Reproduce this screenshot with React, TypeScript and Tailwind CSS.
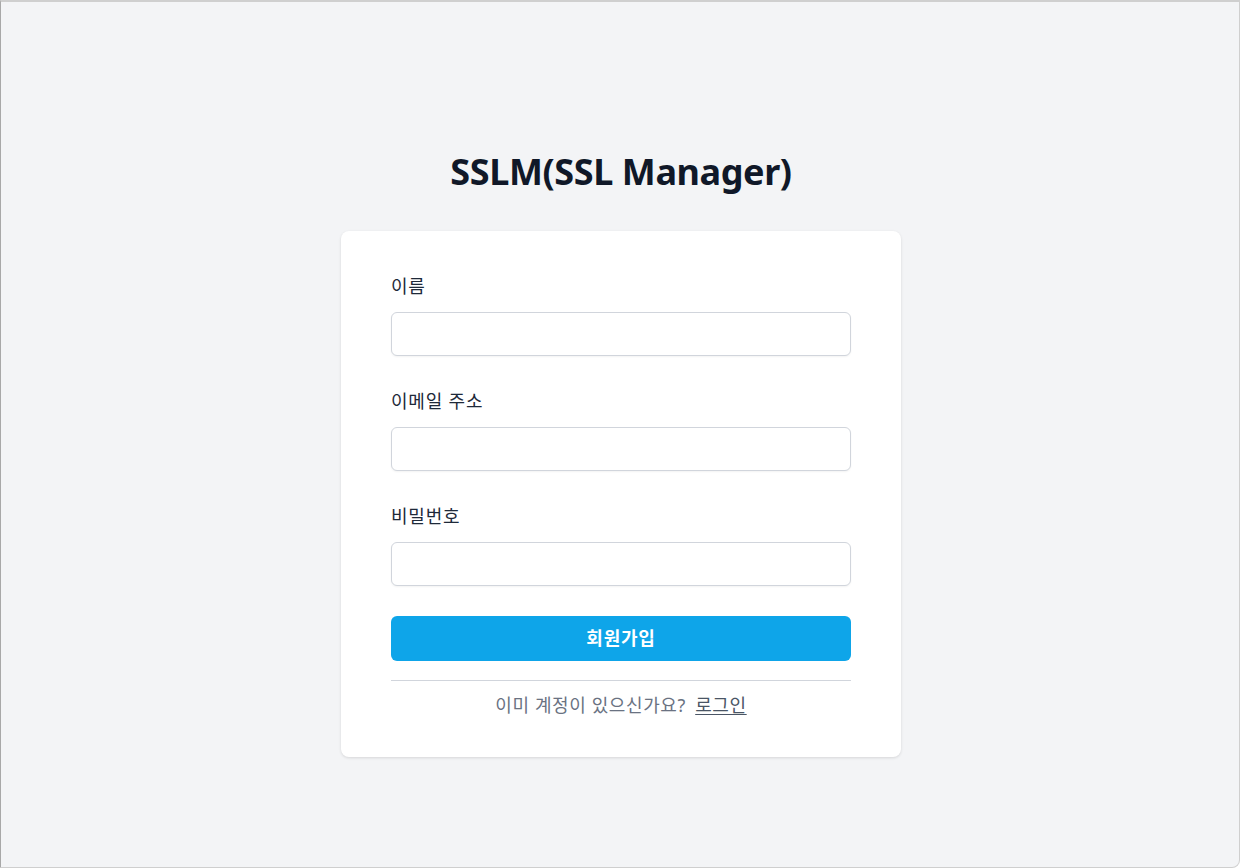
import { useState } from "react";

const font = { fontFamily: '"Noto Sans", "Noto Sans CJK KR", sans-serif' };

interface FieldProps {
    label: string;
    type?: string;
    value: string;
    onChange: (v: string) => void;
}

const Field: React.FC<FieldProps> = ({ label, type = "text", value, onChange }) => (
    <div className="flex flex-col">
        <label className="text-[18px] leading-6 text-gray-800 mb-[14px] tracking-[0.8px]">{label}</label>
        <input
            type={type}
            value={value}
            onChange={(e) => onChange(e.target.value)}
            className="h-[44px] w-full rounded-md border border-gray-300 bg-white px-3 text-gray-900 shadow-[0_1px_2px_rgba(0,0,0,0.05)] outline-none focus:border-sky-500"
        />
    </div>
);

export default function App() {
    const [name, setName] = useState("");
    const [email, setEmail] = useState("");
    const [password, setPassword] = useState("");

    return (
        <div
            className="h-[868px] w-full overflow-hidden bg-[#f3f4f6] border border-t-2 border-[#cfcfcf] border-l-[#a8a8a8] rounded-br-lg"
            style={font}
        >
            <div className="flex flex-col items-center pt-[152px] pl-[2px]">
                <h1 className="text-[36px] leading-9 font-bold text-gray-900 tracking-[-0.4px]">SSLM(SSL Manager)</h1>

                <div className="mt-[41px] w-[560px] rounded-lg bg-white shadow-[0_1px_3px_rgba(0,0,0,0.12)] px-[50px] pt-[43px] pb-[40px]">
                    <div className="flex flex-col gap-[33px]">
                        <Field label="이름" value={name} onChange={setName} />
                        <Field label="이메일 주소" type="email" value={email} onChange={setEmail} />
                        <Field label="비밀번호" type="password" value={password} onChange={setPassword} />
                    </div>

                    <button className="mt-[30px] h-[45px] w-full rounded-md bg-[#0ea5e9] text-white text-[18px] font-bold tracking-[0.8px]">
                        회원가입
                    </button>

                    <div className="mt-[19px] border-t border-gray-300 pt-[12px] text-center text-[18px] leading-6 tracking-[0.6px] text-gray-500">
                        이미 계정이 있으신가요?{" "}
                        <a href="#" className="ml-1 text-gray-600 underline underline-offset-2">로그인</a>
                    </div>
                </div>
            </div>
        </div>
    );
}
